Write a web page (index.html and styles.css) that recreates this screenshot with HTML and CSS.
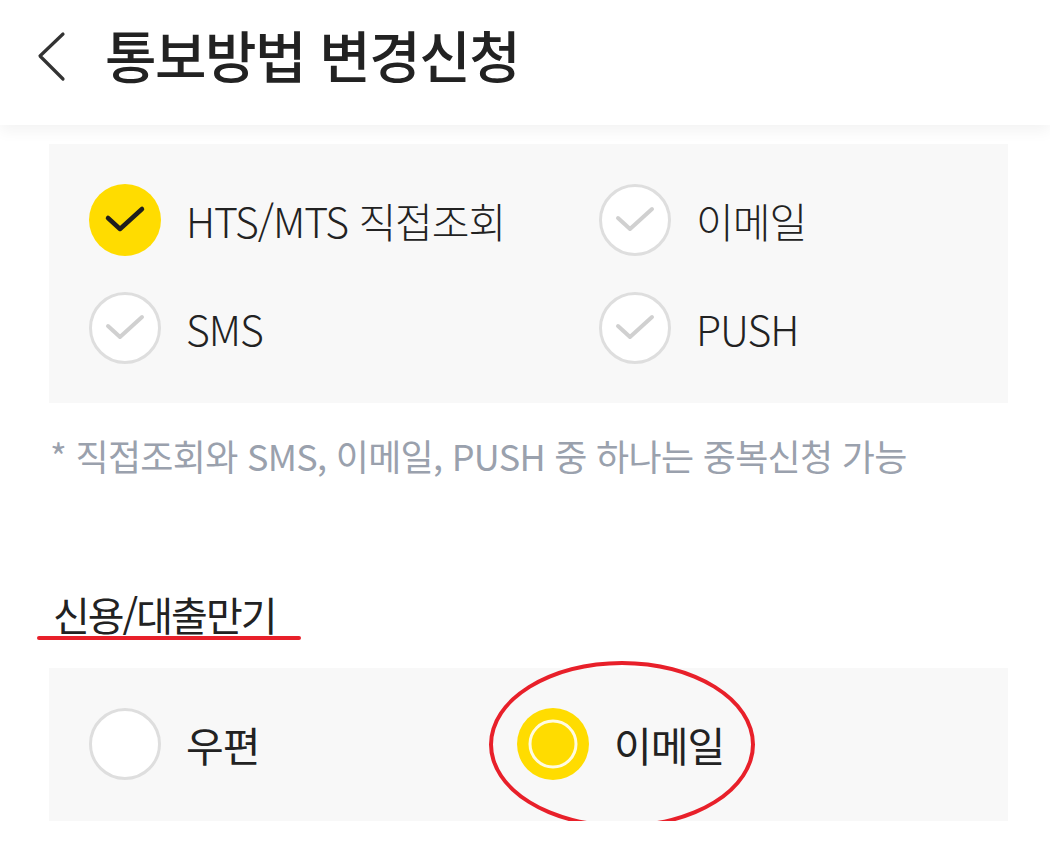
FILE: index.html
```html
<!DOCTYPE html>
<html lang="ko">
<head>
<meta charset="UTF-8" />
<meta name="viewport" content="width=device-width, initial-scale=1" />
<title>통보방법 변경신청</title>
<link rel="stylesheet" href="styles.css">
</head>
<body>

  <header class="topbar">
    <button class="back-btn" aria-label="뒤로">
      <svg width="30" height="52" viewBox="0 0 30 52">
        <path d="M27 4 L4 26 L27 49" fill="none" stroke="#333" stroke-width="3.2" stroke-linecap="round" stroke-linejoin="round"/>
      </svg>
    </button>
    <h1>통보방법 변경신청</h1>
  </header>

  <main class="content">
    <!-- 통보방법 체크 -->
    <div class="option-box check-grid">
      <label class="option">
        <svg class="mark" width="72" height="72" viewBox="0 0 72 72">
          <circle cx="36" cy="36" r="36" fill="#ffdc00"/>
          <path d="M19 34 L31 45 L53 25" fill="none" stroke="#1e1e1e" stroke-width="4.5" stroke-linecap="round" stroke-linejoin="round"/>
        </svg>
        <span class="light">HTS/MTS 직접조회</span>
      </label>
      <label class="option">
        <svg class="mark" width="72" height="72" viewBox="0 0 72 72">
          <circle cx="36" cy="36" r="34.5" fill="#fff" stroke="#dedede" stroke-width="3"/>
          <path d="M19 34 L31 45 L53 25" fill="none" stroke="#d0d0d0" stroke-width="4" stroke-linecap="round" stroke-linejoin="round"/>
        </svg>
        <span class="light">이메일</span>
      </label>
      <label class="option">
        <svg class="mark" width="72" height="72" viewBox="0 0 72 72">
          <circle cx="36" cy="36" r="34.5" fill="#fff" stroke="#dedede" stroke-width="3"/>
          <path d="M19 34 L31 45 L53 25" fill="none" stroke="#d0d0d0" stroke-width="4" stroke-linecap="round" stroke-linejoin="round"/>
        </svg>
        <span class="light">SMS</span>
      </label>
      <label class="option">
        <svg class="mark" width="72" height="72" viewBox="0 0 72 72">
          <circle cx="36" cy="36" r="34.5" fill="#fff" stroke="#dedede" stroke-width="3"/>
          <path d="M19 34 L31 45 L53 25" fill="none" stroke="#d0d0d0" stroke-width="4" stroke-linecap="round" stroke-linejoin="round"/>
        </svg>
        <span class="light">PUSH</span>
      </label>
    </div>

    <p class="note">* 직접조회와 SMS, 이메일, PUSH 중 하나는 중복신청 가능</p>

    <h2 class="section-title"><span>신용/대출만기</span></h2>

    <!-- 신용/대출만기 라디오 -->
    <div class="option-box radio-grid">
      <label class="option">
        <svg class="mark" width="72" height="72" viewBox="0 0 72 72">
          <circle cx="36" cy="36" r="34.5" fill="#fff" stroke="#dedede" stroke-width="3"/>
        </svg>
        <span>우편</span>
      </label>
      <label class="option circled">
        <svg class="mark" width="72" height="72" viewBox="0 0 72 72">
          <circle cx="36" cy="36" r="36" fill="#ffdc00"/>
          <circle cx="36" cy="36" r="23" fill="none" stroke="#fffbe0" stroke-width="3"/>
        </svg>
        <span>이메일</span>
      </label>
    </div>
  </main>

</body>
</html>
```

FILE: styles.css
```css
body {
  margin: 0;
  background: #fff;
  font-family: "Noto Sans CJK KR", "Noto Sans", sans-serif;
  color: #222;
}
.topbar {
  position: relative;
  z-index: 1;
  height: 125px;
  box-sizing: border-box;
  display: flex;
  align-items: center;
  padding: 0 0 14px 36px;
  background: #fff;
  box-shadow: 0 6px 14px rgba(0,0,0,0.05);
}
.back-btn {
  border: none;
  background: none;
  padding: 0;
  width: 30px;
  height: 52px;
  display: flex;
  cursor: pointer;
}
.topbar h1 {
  margin: 0 0 4px 39px;
  font-size: 56px;
  font-weight: 500;
  letter-spacing: -1.5px;
  color: #222;
}
.content {
  padding: 19px 42px 0 49px;
}
.option-box {
  display: grid;
  background: #f8f8f8;
  padding: 40px 0 39px 40px;
}
.check-grid {
  grid-template-columns: 510px 1fr;
  row-gap: 36px;
}
.radio-grid {
  grid-template-columns: 428px 1fr;
  padding-bottom: 41px;
}
.option {
  display: flex;
  align-items: center;
  gap: 25px;
  font-size: 41px;
  line-height: 72px;
  letter-spacing: -1px;
  color: #222;
}
.option .light {
  font-weight: 300;
}
.mark {
  flex: none;
  display: block;
}
.circled {
  position: relative;
}
.circled::after {
  content: "";
  position: absolute;
  left: -28px;
  top: -47px;
  width: 258px;
  height: 159px;
  border: 4px solid #e8202a;
  border-radius: 50%;
}
.note {
  margin: 28px 0 0 1px;
  font-size: 36px;
  line-height: 48px;
  color: #9aa1ad;
  letter-spacing: -0.7px;
}
.section-title {
  margin: 109px 0 0 4px;
  font-size: 40px;
  line-height: 52px;
  font-weight: 400;
  letter-spacing: -2px;
  color: #222;
}
.section-title span {
  position: relative;
}
.section-title span::after {
  content: "";
  position: absolute;
  left: -16px;
  right: -25px;
  bottom: 3px;
  height: 4px;
  border-radius: 2px;
  background: #e8202a;
}
.radio-grid {
  margin-top: 28px;
}
```
